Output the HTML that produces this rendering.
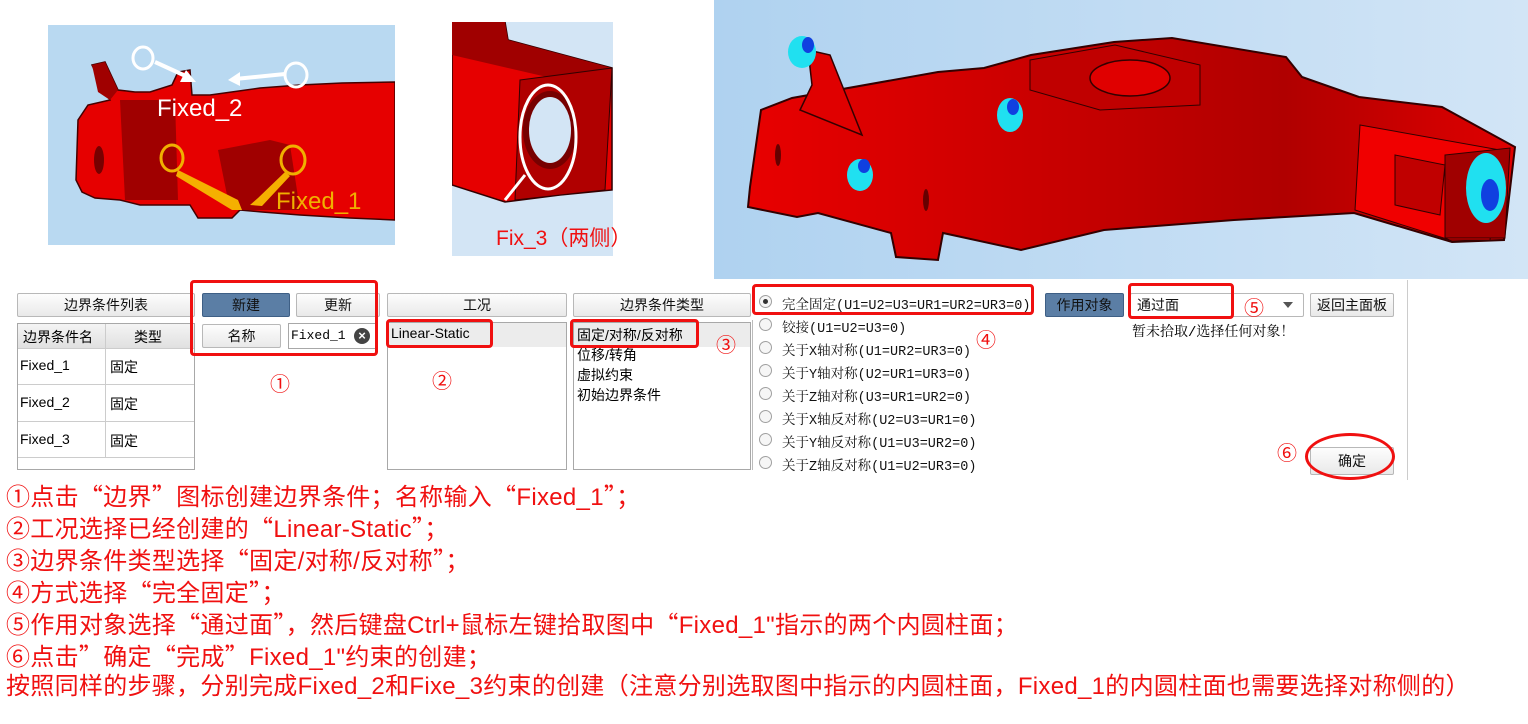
<!DOCTYPE html>
<html><head><meta charset="utf-8"><style>
body{margin:0;width:1528px;height:724px;background:#fff;position:relative;overflow:hidden;font-family:"Liberation Sans","Noto Sans CJK SC",sans-serif}
.a{position:absolute}
.btn{position:absolute;border:1px solid #b8b8b8;border-radius:2px;background:linear-gradient(#fdfdfd,#e9e9e9);font-size:14px;text-align:center;color:#111;box-sizing:border-box}
.blue{background:#5b7ea5;border-color:#3e5f85;color:#111}
.box{position:absolute;border:1px solid #a8a8a8;background:#fff;box-sizing:border-box}
.red{position:absolute;border:3px solid #f01010;border-radius:4px;box-sizing:border-box}
.cn{position:absolute;color:#f01010;font-size:20px}
.rad{position:absolute;left:759px;width:13px;height:13px;border:1px solid #a0a0a0;border-radius:50%;background:#f6f6f6;box-sizing:border-box}
.rl{position:absolute;left:782px;font-family:"Liberation Mono","Noto Serif CJK SC",monospace;font-size:13.5px;color:#111}
.ln{position:absolute;left:6px;color:#f01010;font-size:24px;white-space:nowrap;line-height:30px;letter-spacing:0.3px}
.q{font-family:"Noto Sans CJK SC",sans-serif}
</style></head><body>

<!-- image 1 -->
<svg class="a" style="left:48px;top:25px" width="347" height="220" viewBox="48 25 347 220">
<rect x="48" y="25" width="347" height="220" fill="#b9d9f1"/>
<polygon points="92,65 105,62 118,90 135,92 150,92 172,85 178,72 190,70 192,95 210,95 260,88 300,85 342,83 395,82 395,220 350,218 300,215 262,212 240,210 232,218 198,218 190,205 140,205 120,200 95,198 82,192 76,180 78,120 88,105 110,100 105,92" fill="#e60000" stroke="#400" stroke-width="1.5"/>
<polygon points="120,100 175,100 178,200 125,200" fill="#a00000"/>
<polygon points="218,150 270,140 290,145 300,210 240,210 228,200" fill="#a00000"/>
<polygon points="92,65 105,62 118,90 110,100 98,92" fill="#a00000"/>
<ellipse cx="99" cy="160" rx="5" ry="14" fill="#700" />
<ellipse cx="143" cy="58" rx="10" ry="11" fill="none" stroke="#fff" stroke-width="3"/>
<ellipse cx="296" cy="75" rx="11" ry="12" fill="none" stroke="#fff" stroke-width="3"/>
<path d="M155,62 L190,78" stroke="#fff" stroke-width="4"/><polygon points="196,82 180,82 186,70" fill="#fff"/>
<path d="M285,74 L235,79" stroke="#fff" stroke-width="4"/><polygon points="228,80 240,72 240,86" fill="#fff"/>
<ellipse cx="172" cy="158" rx="11" ry="13" fill="none" stroke="#f0b000" stroke-width="3"/>
<ellipse cx="293" cy="160" rx="12" ry="14" fill="none" stroke="#f0b000" stroke-width="3"/>
<polygon points="178,170 238,200 242,210 232,210 176,176" fill="#f5b000"/>
<polygon points="285,172 258,198 250,205 262,206 290,176" fill="#f5b000"/>
<text x="157" y="116" fill="#fff" font-size="24" font-family="Liberation Sans,sans-serif">Fixed_2</text>
<text x="276" y="209" fill="#f0b000" font-size="24" font-family="Liberation Sans,sans-serif">Fixed_1</text>
</svg>

<!-- image 2 -->
<svg class="a" style="left:452px;top:22px" width="200" height="234" viewBox="452 22 200 234">
<rect x="452" y="22" width="161" height="234" fill="#d3e5f5"/>
<polygon points="452,22 505,22 508,40 612,68 612,190 560,195 505,202 452,185" fill="#e60000" stroke="#300" stroke-width="1.5"/>
<polygon points="452,22 505,22 508,40 612,68 560,80 452,55" fill="#a00000"/>
<polygon points="520,80 612,68 605,190 515,200" fill="#b00000" stroke="#300"/>
<ellipse cx="550" cy="130" rx="24" ry="36" fill="#d3e5f5" stroke="#700" stroke-width="6"/>
<ellipse cx="548" cy="137" rx="28" ry="52" fill="none" stroke="#fff" stroke-width="3"/>
<path d="M525,175 L505,200" stroke="#fff" stroke-width="3"/>
<text x="496" y="245" fill="#f01010" font-size="21" font-family="Liberation Sans,Noto Sans CJK SC,sans-serif">Fix_3（两侧）</text>
</svg>

<!-- image 3 -->
<svg class="a" style="left:714px;top:0" width="814" height="279" viewBox="714 0 814 279">
<defs><linearGradient id="g" x1="0" x2="1"><stop offset="0" stop-color="#afd2f0"/><stop offset="1" stop-color="#d2e5f6"/></linearGradient>
<linearGradient id="r" x1="0" x2="1"><stop offset="0" stop-color="#e80000"/><stop offset=".7" stop-color="#b00000"/><stop offset="1" stop-color="#e00000"/></linearGradient></defs>
<rect x="714" y="0" width="814" height="279" fill="url(#g)"/>
<polygon points="750,187 761,110 792,98 938,72 984,68 1031,55 1114,42 1172,38 1286,57 1302,77 1359,97 1442,107 1515,147 1504,240 1452,242 1354,213 1234,220 1104,230 1021,250 943,233 938,260 896,257 891,233 818,213 797,217 748,207" fill="url(#r)" stroke="#300" stroke-width="2"/>
<polygon points="808,50 830,55 850,105 862,135 800,110 812,85" fill="#e00000" stroke="#300" stroke-width="1.5"/>
<polygon points="1030,60 1115,45 1200,65 1200,105 1100,110 1030,90" fill="#c00000" stroke="#300"/>
<ellipse cx="1130" cy="78" rx="40" ry="18" fill="#e00000" stroke="#300" stroke-width="1.5"/>
<polygon points="1360,125 1500,150 1490,240 1450,240 1355,210" fill="#f00000" stroke="#300"/>
<polygon points="1445,155 1510,148 1505,238 1445,238" fill="#a00000" stroke="#300"/>
<polygon points="1395,155 1445,165 1440,215 1395,205" fill="#c00000" stroke="#300"/>
<ellipse cx="802" cy="52" rx="14" ry="16" fill="#20e0f0"/><ellipse cx="808" cy="45" rx="6" ry="8" fill="#1040e0"/>
<ellipse cx="1010" cy="115" rx="13" ry="17" fill="#20e0f0"/><ellipse cx="1013" cy="107" rx="6" ry="8" fill="#1040e0"/>
<ellipse cx="860" cy="175" rx="13" ry="16" fill="#20e0f0"/><ellipse cx="864" cy="166" rx="6" ry="7" fill="#1040e0"/>
<ellipse cx="1486" cy="188" rx="20" ry="35" fill="#20e0f0"/><ellipse cx="1490" cy="195" rx="9" ry="16" fill="#1040e0"/>
<ellipse cx="778" cy="155" rx="3" ry="11" fill="#600"/>
<ellipse cx="926" cy="200" rx="3" ry="11" fill="#600"/>
</svg>

<!-- UI panel -->
<div class="btn" style="left:17px;top:293px;width:178px;height:24px;line-height:22px">边界条件列表</div>
<div class="box" style="left:17px;top:323px;width:178px;height:147px"></div>
<div class="a" style="left:18px;top:324px;width:176px;height:24px;background:linear-gradient(#f4f4f4,#e0e0e0);border-bottom:1px solid #ccc"></div>
<div class="a" style="left:105px;top:324px;width:1px;height:134px;background:#ccc"></div>
<div class="a" style="left:23px;top:327px;font-size:14px">边界条件名</div>
<div class="a" style="left:134px;top:327px;font-size:14px">类型</div>
<div class="a" style="left:18px;top:384px;width:176px;height:1px;background:#ccc"></div>
<div class="a" style="left:18px;top:421px;width:176px;height:1px;background:#ccc"></div>
<div class="a" style="left:18px;top:457px;width:176px;height:1px;background:#ccc"></div>
<div class="a" style="left:20px;top:357px;font-size:14px">Fixed_1</div><div class="a" style="left:110px;top:357px;font-size:14px">固定</div>
<div class="a" style="left:20px;top:394px;font-size:14px">Fixed_2</div><div class="a" style="left:110px;top:394px;font-size:14px">固定</div>
<div class="a" style="left:20px;top:431px;font-size:14px">Fixed_3</div><div class="a" style="left:110px;top:431px;font-size:14px">固定</div>

<div class="btn blue" style="left:202px;top:293px;width:88px;height:24px;line-height:22px">新建</div>
<div class="btn" style="left:296px;top:293px;width:84px;height:24px;line-height:22px">更新</div>
<div class="btn" style="left:202px;top:324px;width:79px;height:24px;line-height:22px">名称</div>
<div class="box" style="left:288px;top:323px;width:89px;height:26px;font-family:'Liberation Mono',monospace;font-size:13px;line-height:24px;padding-left:2px">Fixed_1</div>
<div class="a" style="left:354px;top:328px;width:16px;height:16px;border-radius:50%;background:#444;color:#fff;font-size:13px;line-height:16px;text-align:center;font-weight:bold">×</div>
<div class="red" style="left:190px;top:280px;width:188px;height:76px"></div>
<div class="cn" style="left:270px;top:368px">①</div>

<div class="btn" style="left:387px;top:293px;width:180px;height:24px;line-height:22px">工况</div>
<div class="box" style="left:387px;top:322px;width:180px;height:148px"></div>
<div class="a" style="left:388px;top:323px;width:178px;height:24px;background:#ececec"></div>
<div class="a" style="left:391px;top:325px;font-size:14px">Linear-Static</div>
<div class="red" style="left:386px;top:319px;width:107px;height:29px"></div>
<div class="cn" style="left:432px;top:365px">②</div>

<div class="btn" style="left:573px;top:293px;width:178px;height:24px;line-height:22px">边界条件类型</div>
<div class="box" style="left:573px;top:322px;width:178px;height:148px"></div>
<div class="a" style="left:574px;top:323px;width:176px;height:24px;background:#ececec"></div>
<div class="a" style="left:577px;top:325px;font-size:14px;line-height:20px">固定/对称/反对称<br>位移/转角<br>虚拟约束<br>初始边界条件</div>
<div class="red" style="left:570px;top:319px;width:129px;height:29px"></div>
<div class="cn" style="left:716px;top:329px">③</div>

<div class="a" style="left:752px;top:320px;width:1px;height:150px;background:#bbb"></div>
<div class="rad" style="top:295px"><div class="a" style="left:3px;top:3px;width:5px;height:5px;border-radius:50%;background:#333"></div></div>
<div class="rl" style="top:293px">完全固定(U1=U2=U3=UR1=UR2=UR3=0)</div>
<div class="rad" style="top:318px"></div><div class="rl" style="top:316px">铰接(U1=U2=U3=0)</div>
<div class="rad" style="top:341px"></div><div class="rl" style="top:339px">关于X轴对称(U1=UR2=UR3=0)</div>
<div class="rad" style="top:364px"></div><div class="rl" style="top:362px">关于Y轴对称(U2=UR1=UR3=0)</div>
<div class="rad" style="top:387px"></div><div class="rl" style="top:385px">关于Z轴对称(U3=UR1=UR2=0)</div>
<div class="rad" style="top:410px"></div><div class="rl" style="top:408px">关于X轴反对称(U2=U3=UR1=0)</div>
<div class="rad" style="top:433px"></div><div class="rl" style="top:431px">关于Y轴反对称(U1=U3=UR2=0)</div>
<div class="rad" style="top:456px"></div><div class="rl" style="top:454px">关于Z轴反对称(U1=U2=UR3=0)</div>
<div class="red" style="left:752px;top:284px;width:282px;height:31px"></div>
<div class="cn" style="left:976px;top:324px">④</div>

<div class="btn blue" style="left:1045px;top:293px;width:79px;height:24px;line-height:22px">作用对象</div>
<div class="btn" style="left:1130px;top:293px;width:174px;height:24px;line-height:22px;text-align:left;padding-left:6px;background:#fff">通过面</div>
<div class="a" style="left:1283px;top:302px;border-left:5px solid transparent;border-right:5px solid transparent;border-top:6px solid #555"></div>
<div class="red" style="left:1128px;top:283px;width:106px;height:36px"></div>
<div class="cn" style="left:1244px;top:292px">⑤</div>
<div class="btn" style="left:1310px;top:293px;width:84px;height:24px;line-height:22px">返回主面板</div>
<div class="a" style="left:1132px;top:321px;font-size:14px;font-family:'Liberation Mono','Noto Serif CJK SC',monospace">暂未拾取/选择任何对象！</div>
<div class="a" style="left:1407px;top:280px;width:1px;height:200px;background:#ccc"></div>
<div class="btn" style="left:1310px;top:447px;width:84px;height:28px;line-height:26px">确定</div>
<div class="a" style="left:1305px;top:433px;width:90px;height:47px;border:3px solid #f01010;border-radius:50%;box-sizing:border-box"></div>
<div class="cn" style="left:1277px;top:437px">⑥</div>

<div class="ln" style="top:480px">①点击<span class="q">“</span>边界<span class="q">”</span>图标创建边界条件；名称输入<span class="q">“</span>Fixed_1<span class="q">”</span>；</div>
<div class="ln" style="top:512px">②工况选择已经创建的<span class="q">“</span>Linear-Static<span class="q">”</span>；</div>
<div class="ln" style="top:544px">③边界条件类型选择<span class="q">“</span>固定/对称/反对称<span class="q">”</span>；</div>
<div class="ln" style="top:576px">④方式选择<span class="q">“</span>完全固定<span class="q">”</span>；</div>
<div class="ln" style="top:608px">⑤作用对象选择<span class="q">“</span>通过面<span class="q">”</span>，然后键盘Ctrl+鼠标左键拾取图中<span class="q">“</span>Fixed_1"指示的两个内圆柱面；</div>
<div class="ln" style="top:640px">⑥点击<span class="q">”</span>确定<span class="q">“</span>完成<span class="q">”</span>Fixed_1"约束的创建；</div>
<div class="ln" style="top:672px">按照同样的步骤，分别完成Fixed_2和Fixe_3约束的创建（注意分别选取图中指示的内圆柱面，Fixed_1的内圆柱面也需要选择对称侧的）</div>
</body></html>
